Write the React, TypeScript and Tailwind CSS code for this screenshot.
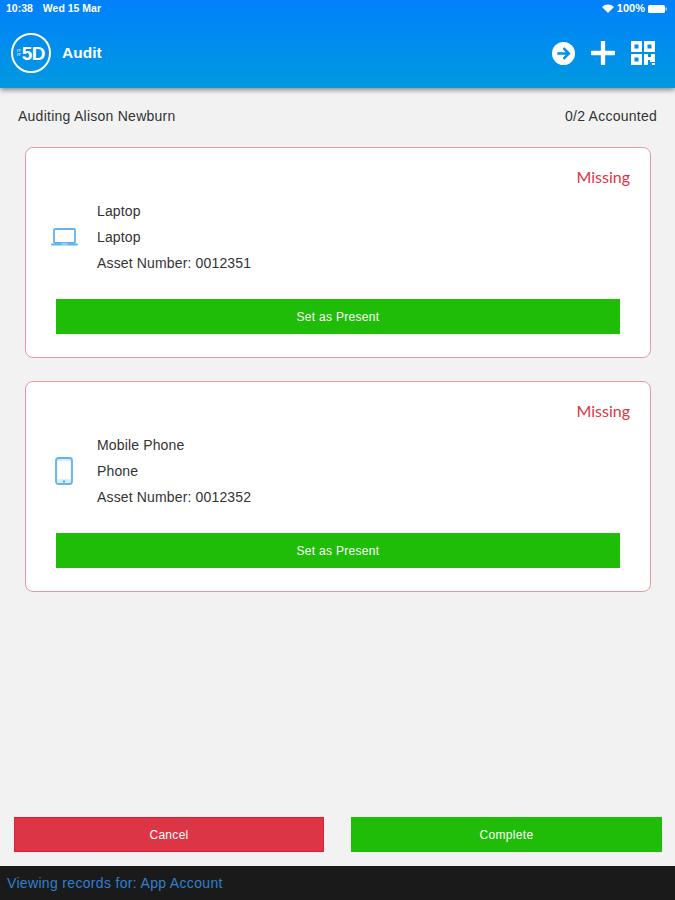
const font = { fontFamily: '"Liberation Sans", Arial, sans-serif' }

function Logo() {
  return (
    <div className="w-[40px] h-[40px] rounded-full border-2 border-white flex items-center justify-center gap-[1px] shrink-0">
      <span className="flex flex-col text-[4px] leading-[4px] font-bold text-white/80">
        <span>IT</span>
        <span>IT</span>
      </span>
      <span className="text-[19px] leading-none font-bold text-white tracking-[-0.5px]">5D</span>
    </div>
  )
}

function QrIcon() {
  return (
    <svg width="24" height="24" viewBox="0 0 24 24" fill="none">
      <rect x="1.75" y="1.75" width="7.5" height="7.5" stroke="white" strokeWidth="3.5" />
      <rect x="14.75" y="1.75" width="7.5" height="7.5" stroke="white" strokeWidth="3.5" />
      <rect x="1.75" y="14.75" width="7.5" height="7.5" stroke="white" strokeWidth="3.5" />
      <path d="M13 24V13h4v3h3v-3h4v8h-5v-2h-2v5z" fill="white" />
      <rect x="21" y="22" width="3" height="2" fill="white" />
    </svg>
  )
}

function LaptopIcon() {
  return (
    <svg width="27" height="18" viewBox="0 0 27 18" fill="none">
      <rect x="3" y="1" width="21" height="14" rx="1" stroke="#62b3ee" strokeWidth="1.8" />
      <path d="M1 16.5h25" stroke="#62b3ee" strokeWidth="2" strokeLinecap="round" />
      <path d="M10.5 16h6" stroke="#a9d6f6" strokeWidth="1.5" />
    </svg>
  )
}

function PhoneIcon() {
  return (
    <svg width="18" height="28" viewBox="0 0 18 28" fill="none">
      <rect x="1" y="1" width="16" height="26" rx="2.5" stroke="#62b3ee" strokeWidth="1.8" fill="#d9eefc" />
      <rect x="2.5" y="4" width="13" height="18" fill="white" />
      <circle cx="9" cy="24.5" r="1.2" fill="#62b3ee" />
    </svg>
  )
}

function AssetCard({ icon, name, type, number }: { icon: React.ReactNode; name: string; type: string; number: string }) {
  return (
    <div className="ml-[25px] mr-[24px] h-[211px] rounded-[8px] border border-[#e89aa4] bg-white pt-[19px] px-[30px] text-[#333]">
      <div className="-mr-[10px] text-right text-[16px] leading-[20px] text-[#dc3545]" style={{ fontFamily: 'Lato, sans-serif' }}>
        Missing
      </div>
      <div className="flex items-center mt-[11px] h-[78px]">
        <div className="-ml-[6px] w-[28px] mr-[19px] flex justify-center shrink-0">{icon}</div>
        <div className="flex flex-col text-[14px] leading-[26px] tracking-[0.15px]">
          <span>{name}</span>
          <span>{type}</span>
          <span>{number}</span>
        </div>
      </div>
      <button className="mt-[23px] w-full h-[35px] bg-[#1fbd08] text-white text-[12px] tracking-[0.3px]">Set as Present</button>
    </div>
  )
}

export default function App() {
  return (
    <div className="w-[675px] h-[900px] flex flex-col bg-[#f2f2f2] overflow-hidden" style={font}>
      <header className="h-[88px] shrink-0 bg-gradient-to-b from-[#0380fb] to-[#0299e0] shadow-[0_2px_5px_rgba(0,0,0,0.45)] text-white px-[11px] z-10">
        <div className="flex justify-between items-center h-[17px] text-[10.5px] font-bold">
          <div className="flex gap-[10px] -ml-[5px]">
            <span>10:38</span>
            <span>Wed 15 Mar</span>
          </div>
          <div className="flex items-center gap-[3px] -mr-[3px]">
            <svg width="12" height="9" viewBox="0 0 12 9">
              <path d="M0 3a8.5 8.5 0 0 1 12 0L6 9z" fill="white" />
            </svg>
            <span className="text-[11px]">100%</span>
            <svg width="19" height="8" viewBox="0 0 19 8">
              <rect width="17" height="8" rx="1.5" fill="white" />
              <rect x="17.5" y="2.5" width="1.5" height="3" fill="white" fillOpacity="0.6" />
            </svg>
          </div>
        </div>
        <div className="flex items-center h-[40px] mt-[16px]">
          <Logo />
          <span className="ml-[11px] text-[15.5px] font-bold">Audit</span>
          <div className="ml-auto flex items-center gap-[16px] pr-[9px]">
            <svg width="23" height="23" viewBox="0 0 24 24">
              <circle cx="12" cy="12" r="12" fill="white" />
              <path d="M5.5 12h12M12 6.5l5.5 5.5-5.5 5.5" stroke="#0290ea" strokeWidth="2.6" fill="none" />
            </svg>
            <svg width="24" height="24" viewBox="0 0 25 25">
              <path d="M12.5 1v23M1 12.5h23" stroke="white" strokeWidth="4.5" strokeLinecap="round" />
            </svg>
            <QrIcon />
          </div>
        </div>
      </header>

      <div className="flex justify-between items-center px-[18px] pt-[20px] text-[14px] leading-[16px] text-[#333] tracking-[0.25px]">
        <span>Auditing Alison Newburn</span>
        <span>0/2 Accounted</span>
      </div>

      <div className="flex flex-col gap-[23px] mt-[23px]">
        <AssetCard icon={<LaptopIcon />} name="Laptop" type="Laptop" number="Asset Number: 0012351" />
        <AssetCard icon={<PhoneIcon />} name="Mobile Phone" type="Phone" number="Asset Number: 0012352" />
      </div>

      <div className="mt-auto flex justify-between pl-[14px] pr-[13px] pb-[14px]">
        <button className="w-[310px] h-[35px] bg-[#dc3545] border border-[#e01c38] text-white text-[12px] tracking-[0.3px]">Cancel</button>
        <button className="w-[311px] h-[35px] bg-[#1fbd08] text-white text-[12px] tracking-[0.3px]">Complete</button>
      </div>

      <footer className="h-[34px] shrink-0 bg-[#1a1a1a] flex items-center px-[7px] text-[14px] text-[#2f80d0] tracking-[0.33px]">
        Viewing records for: App Account
      </footer>
    </div>
  )
}
